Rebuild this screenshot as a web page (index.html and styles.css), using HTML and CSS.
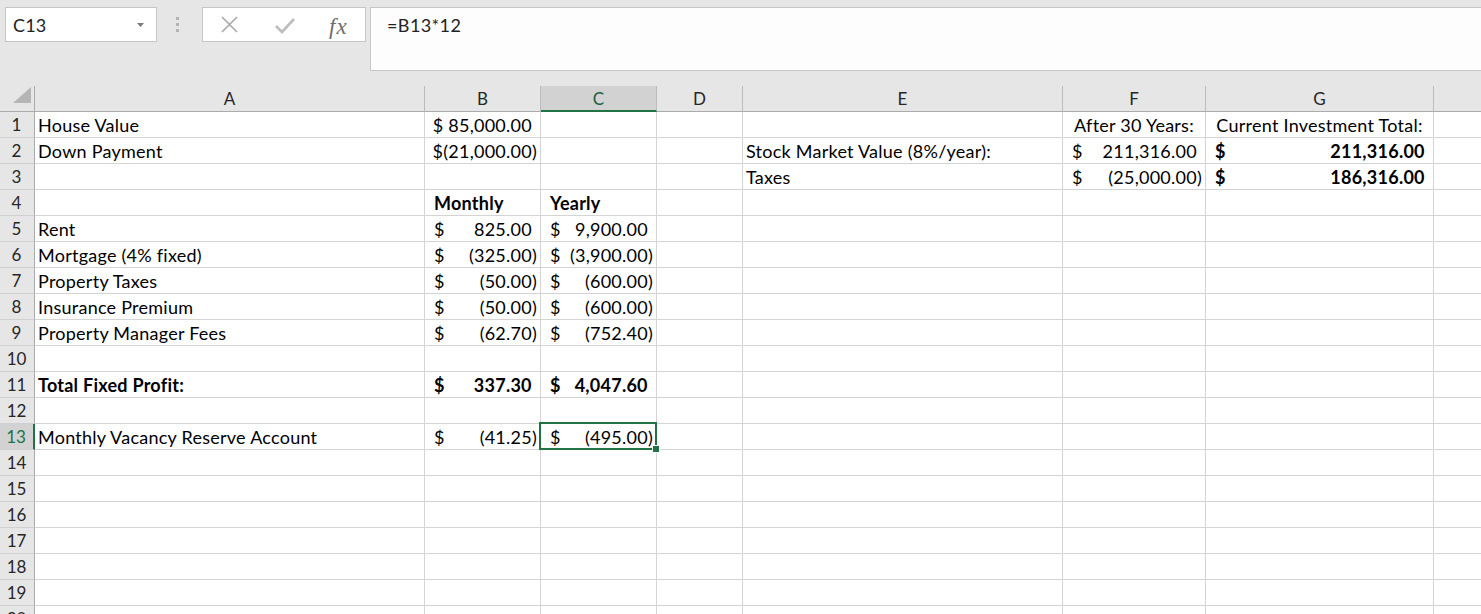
FILE: index.html
```html
<!DOCTYPE html>
<html>
<head>
<meta charset="utf-8">
<link rel="stylesheet" href="styles.css">
</head>
<body>
<div class="app">
  <div class="toolbar">
    <div class="namebox">
      <span class="name">C13</span>
      <svg class="dd" width="8" height="5" viewBox="0 0 8 5"><polygon points="0,0 7,0 3.5,4" fill="#7a7a7a"/></svg>
    </div>
    <div class="grip"><i></i><i></i><i></i></div>
    <div class="fbtns">
      <svg class="ico" width="20" height="20" viewBox="0 0 20 20"><path d="M2 2 L17 17 M17 2 L2 17" stroke="#a8a8a8" stroke-width="1.6" fill="none"/></svg>
      <svg class="ico" width="22" height="20" viewBox="0 0 22 20"><path d="M2 11 L8 17 L20 4" stroke="#bdbdbd" stroke-width="2.6" fill="none"/></svg>
      <span class="fx">fx</span>
    </div>
    <div class="formula">=B13*12</div>
  </div>

  <div class="sheet">
    <!-- header -->
    <div class="corner"><svg width="34" height="25" viewBox="0 0 34 25"><polygon points="31,1 31,17 13,17" fill="#b5b5b5"/></svg></div>
    <div class="ch">A</div>
    <div class="ch">B</div>
    <div class="ch ch-act">C</div>
    <div class="ch">D</div>
    <div class="ch">E</div>
    <div class="ch">F</div>
    <div class="ch">G</div>
    <div class="ch"></div>

    <!-- 1 -->
    <div class="rh">1</div>
    <div class="c">House Value</div>
    <div class="c r">$ 85,000.00<span class="pp">)</span></div>
    <div class="c"></div><div class="c"></div><div class="c"></div>
    <div class="c ctr">After 30 Years:</div>
    <div class="c ctr">Current Investment Total:</div>
    <div class="c"></div>

    <!-- 2 -->
    <div class="rh">2</div>
    <div class="c">Down Payment</div>
    <div class="c r">$(21,000.00)</div>
    <div class="c"></div><div class="c"></div>
    <div class="c">Stock Market Value (8%/year):</div>
    <div class="c acc"><span>$</span><span>211,316.00<span class="pp">)</span></span></div>
    <div class="c acc b"><span>$</span><span>211,316.00<span class="pp">)</span></span></div>
    <div class="c"></div>

    <!-- 3 -->
    <div class="rh">3</div>
    <div class="c"></div><div class="c"></div><div class="c"></div><div class="c"></div>
    <div class="c">Taxes</div>
    <div class="c acc"><span>$</span><span>(25,000.00)</span></div>
    <div class="c acc b"><span>$</span><span>186,316.00<span class="pp">)</span></span></div>
    <div class="c"></div>

    <!-- 4 -->
    <div class="rh">4</div>
    <div class="c"></div>
    <div class="c b ind">Monthly</div>
    <div class="c b ind">Yearly</div>
    <div class="c"></div><div class="c"></div><div class="c"></div><div class="c"></div><div class="c"></div>

    <!-- 5 -->
    <div class="rh">5</div>
    <div class="c">Rent</div>
    <div class="c acc"><span>$</span><span>825.00<span class="pp">)</span></span></div>
    <div class="c acc"><span>$</span><span>9,900.00<span class="pp">)</span></span></div>
    <div class="c"></div><div class="c"></div><div class="c"></div><div class="c"></div><div class="c"></div>

    <!-- 6 -->
    <div class="rh">6</div>
    <div class="c">Mortgage (4% fixed)</div>
    <div class="c acc"><span>$</span><span>(325.00)</span></div>
    <div class="c acc"><span>$</span><span>(3,900.00)</span></div>
    <div class="c"></div><div class="c"></div><div class="c"></div><div class="c"></div><div class="c"></div>

    <!-- 7 -->
    <div class="rh">7</div>
    <div class="c">Property Taxes</div>
    <div class="c acc"><span>$</span><span>(50.00)</span></div>
    <div class="c acc"><span>$</span><span>(600.00)</span></div>
    <div class="c"></div><div class="c"></div><div class="c"></div><div class="c"></div><div class="c"></div>

    <!-- 8 -->
    <div class="rh">8</div>
    <div class="c">Insurance Premium</div>
    <div class="c acc"><span>$</span><span>(50.00)</span></div>
    <div class="c acc"><span>$</span><span>(600.00)</span></div>
    <div class="c"></div><div class="c"></div><div class="c"></div><div class="c"></div><div class="c"></div>

    <!-- 9 -->
    <div class="rh">9</div>
    <div class="c">Property Manager Fees</div>
    <div class="c acc"><span>$</span><span>(62.70)</span></div>
    <div class="c acc"><span>$</span><span>(752.40)</span></div>
    <div class="c"></div><div class="c"></div><div class="c"></div><div class="c"></div><div class="c"></div>

    <!-- 10 -->
    <div class="rh">10</div>
    <div class="c"></div><div class="c"></div><div class="c"></div><div class="c"></div><div class="c"></div><div class="c"></div><div class="c"></div><div class="c"></div>

    <!-- 11 -->
    <div class="rh">11</div>
    <div class="c b">Total Fixed Profit:</div>
    <div class="c acc b"><span>$</span><span>337.30<span class="pp">)</span></span></div>
    <div class="c acc b"><span>$</span><span>4,047.60<span class="pp">)</span></span></div>
    <div class="c"></div><div class="c"></div><div class="c"></div><div class="c"></div><div class="c"></div>

    <!-- 12 -->
    <div class="rh">12</div>
    <div class="c"></div><div class="c"></div><div class="c"></div><div class="c"></div><div class="c"></div><div class="c"></div><div class="c"></div><div class="c"></div>

    <!-- 13 -->
    <div class="rh rh-act">13</div>
    <div class="c">Monthly Vacancy Reserve Account</div>
    <div class="c acc"><span>$</span><span>(41.25)</span></div>
    <div class="c acc selcell"><span>$</span><span>(495.00)</span><div class="sel"><div class="handle"></div></div></div>
    <div class="c"></div><div class="c"></div><div class="c"></div><div class="c"></div><div class="c"></div>

    <!-- 14 -->
    <div class="rh">14</div>
    <div class="c"></div><div class="c"></div><div class="c"></div><div class="c"></div><div class="c"></div><div class="c"></div><div class="c"></div><div class="c"></div>
    <!-- 15 -->
    <div class="rh">15</div>
    <div class="c"></div><div class="c"></div><div class="c"></div><div class="c"></div><div class="c"></div><div class="c"></div><div class="c"></div><div class="c"></div>
    <!-- 16 -->
    <div class="rh">16</div>
    <div class="c"></div><div class="c"></div><div class="c"></div><div class="c"></div><div class="c"></div><div class="c"></div><div class="c"></div><div class="c"></div>
    <!-- 17 -->
    <div class="rh">17</div>
    <div class="c"></div><div class="c"></div><div class="c"></div><div class="c"></div><div class="c"></div><div class="c"></div><div class="c"></div><div class="c"></div>
    <!-- 18 -->
    <div class="rh">18</div>
    <div class="c"></div><div class="c"></div><div class="c"></div><div class="c"></div><div class="c"></div><div class="c"></div><div class="c"></div><div class="c"></div>
    <!-- 19 -->
    <div class="rh">19</div>
    <div class="c"></div><div class="c"></div><div class="c"></div><div class="c"></div><div class="c"></div><div class="c"></div><div class="c"></div><div class="c"></div>
    <!-- 20 -->
    <div class="rh">20</div>
    <div class="c"></div><div class="c"></div><div class="c"></div><div class="c"></div><div class="c"></div><div class="c"></div><div class="c"></div><div class="c"></div>
  </div>
</div>
</body>
</html>
```

FILE: styles.css
```css
* { box-sizing: border-box; }
html, body { margin: 0; padding: 0; }
body {
  width: 1481px;
  height: 614px;
  overflow: hidden;
  background: #e6e6e6;
  font-family: Lato, "Liberation Sans", sans-serif;
  color: #000;
}
.app { width: 1481px; height: 614px; overflow: hidden; }

/* toolbar / formula bar */
.toolbar {
  height: 86px;
  display: flex;
  align-items: flex-start;
  padding: 7px 0 0 5px;
  background: #e6e6e6;
}
.namebox {
  width: 152px;
  height: 35px;
  background: #fff;
  border: 1px solid #c6c6c6;
  display: flex;
  align-items: center;
  justify-content: space-between;
  padding: 0 11px 0 7px;
}
.name { font-size: 18px; letter-spacing: 0.2px; color: #222; }
.dd { margin-top: 1px; }
.grip {
  width: 45px;
  height: 35px;
  display: flex;
  flex-direction: column;
  align-items: center;
  justify-content: center;
  gap: 3px;
  padding-right: 5px;
}
.grip i {
  display: block;
  width: 3px;
  height: 3px;
  background: #b4b4b4;
}
.fbtns {
  width: 164px;
  height: 35px;
  background: #fff;
  border: 1px solid #c6c6c6;
  display: flex;
  align-items: center;
  padding: 0 0 0 17px;
}
.fbtns .ico:first-child { margin-right: 34px; }
.fbtns .ico:nth-child(2) { margin-right: 33px; }
.fx {
  font-family: "Liberation Serif", "DejaVu Serif", serif;
  font-style: italic;
  font-size: 23px;
  letter-spacing: 1px;
  color: #6d6d6d;
  margin-top: 4px;
}
.formula {
  margin-left: 4px;
  flex: 1;
  height: 64px;
  background: #fdfdfd;
  border: 1px solid #c6c6c6;
  border-right: none;
  font-size: 18px;
  letter-spacing: 0.4px;
  color: #222;
  padding: 7px 0 0 16px;
  line-height: 20px;
}

/* sheet grid */
.sheet {
  display: grid;
  grid-template-columns: 35px 390px 116px 116px 86px 320px 143px 228px 200px;
  grid-auto-rows: 26px;
  background: #fff;
  width: 1634px;
}
.corner {
  background: #e6e6e6;
  border-right: 1px solid #ababab;
  border-bottom: 1px solid #ababab;
  display: flex;
  align-items: flex-start;
}
.ch {
  background: #e6e6e6;
  border-right: 1px solid #bcbcbc;
  border-bottom: 1px solid #ababab;
  display: flex;
  align-items: center;
  justify-content: center;
  font-size: 17px;
  color: #262626;
  line-height: 20px;
  padding-top: 1px;
}
.ch-act {
  background: #d2d2d2;
  border-bottom: 2px solid #217346;
  color: #1f5e3c;
  padding-top: 2px;
}
.rh {
  background: #e6e6e6;
  border-right: 1px solid #ababab;
  border-bottom: 1px solid #d0d0d0;
  display: flex;
  align-items: flex-end;
  justify-content: center;
  font-size: 17px;
  line-height: 20px;
  color: #262626;
  padding: 0 1px 2px 0;
}
.rh-act {
  background: #d2d2d2;
  border-right: 2px solid #217346;
  color: #217346;
}
.c {
  border-right: 1px solid #d4d4d4;
  border-bottom: 1px solid #d4d4d4;
  display: flex;
  align-items: flex-end;
  font-size: 18px;
  letter-spacing: 0.25px;
  line-height: 20px;
  padding: 0 3px 2px 3px;
  white-space: nowrap;
}
.r { justify-content: flex-end; }
.ctr { justify-content: center; }
.b { font-weight: bold; }
.ind { padding-left: 9px; }
.acc {
  justify-content: space-between;
  padding-left: 9px;
}
.pp { visibility: hidden; }

.selcell { position: relative; }
.sel {
  position: absolute;
  left: -2px;
  top: -2px;
  right: -1px;
  bottom: -1px;
  border: 2px solid #217346;
  pointer-events: none;
}
.handle {
  position: absolute;
  right: -5px;
  bottom: -5px;
  width: 8px;
  height: 8px;
  background: #217346;
  border: 1px solid #fff;
}
```
